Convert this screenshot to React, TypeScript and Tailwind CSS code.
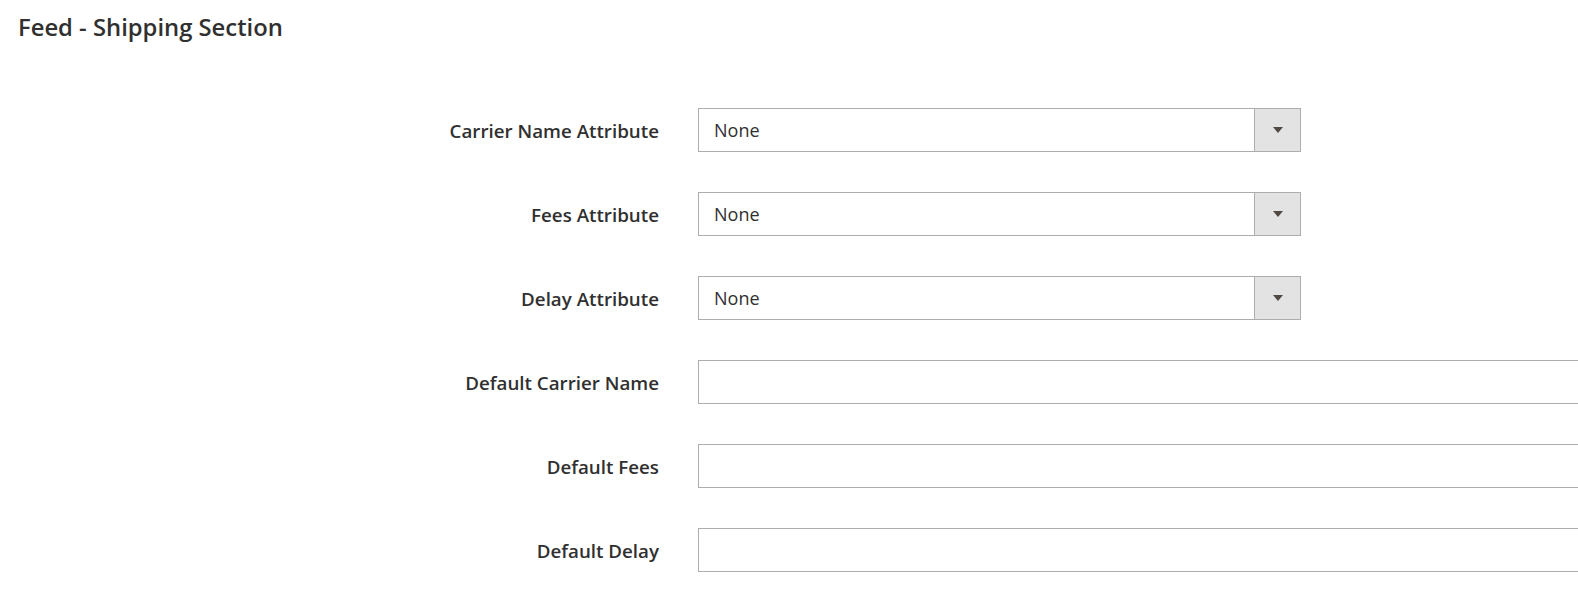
import React from "react";

const selects = ["Carrier Name Attribute", "Fees Attribute", "Delay Attribute"];
const inputs = ["Default Carrier Name", "Default Fees", "Default Delay"];

function Label({ text }: { text: string }) {
  return (
    <div className="w-[659px] shrink-0 pt-[2px] text-right text-[18.75px] font-semibold text-[#303030]">
      {text}
    </div>
  );
}

export default function App() {
  return (
    <div
      className="w-[1578px] h-[612px] overflow-hidden bg-white"
      style={{ fontFamily: '"Open Sans", "Noto Sans", sans-serif' }}
    >
      <h1 className="pl-[18px] pt-[11px] text-[23.8px] leading-[32px] font-semibold text-[#303030]">
        Feed - Shipping Section
      </h1>
      <div className="mt-[65px] flex flex-col gap-[40px]">
        {selects.map((s) => (
          <div key={s} className="flex items-center">
            <Label text={s} />
            <div className="ml-[39px] flex h-[44px] w-[603px] shrink-0 border border-[#adadad] bg-white">
              <div className="flex flex-1 items-center pl-[15px] text-[18px] text-[#303030]">None</div>
              <div className="flex w-[46px] items-center justify-center border-l border-[#adadad] bg-[#e3e3e3]">
                <svg width="10" height="7" viewBox="0 0 10 7">
                  <path d="M0 0 L10 0 L5 6 Z" fill="#514943" />
                </svg>
              </div>
            </div>
          </div>
        ))}
        {inputs.map((s) => (
          <div key={s} className="flex items-center">
            <Label text={s} />
            <div className="ml-[39px] h-[44px] w-[1000px] shrink-0 border border-[#adadad] bg-white" />
          </div>
        ))}
      </div>
    </div>
  );
}
